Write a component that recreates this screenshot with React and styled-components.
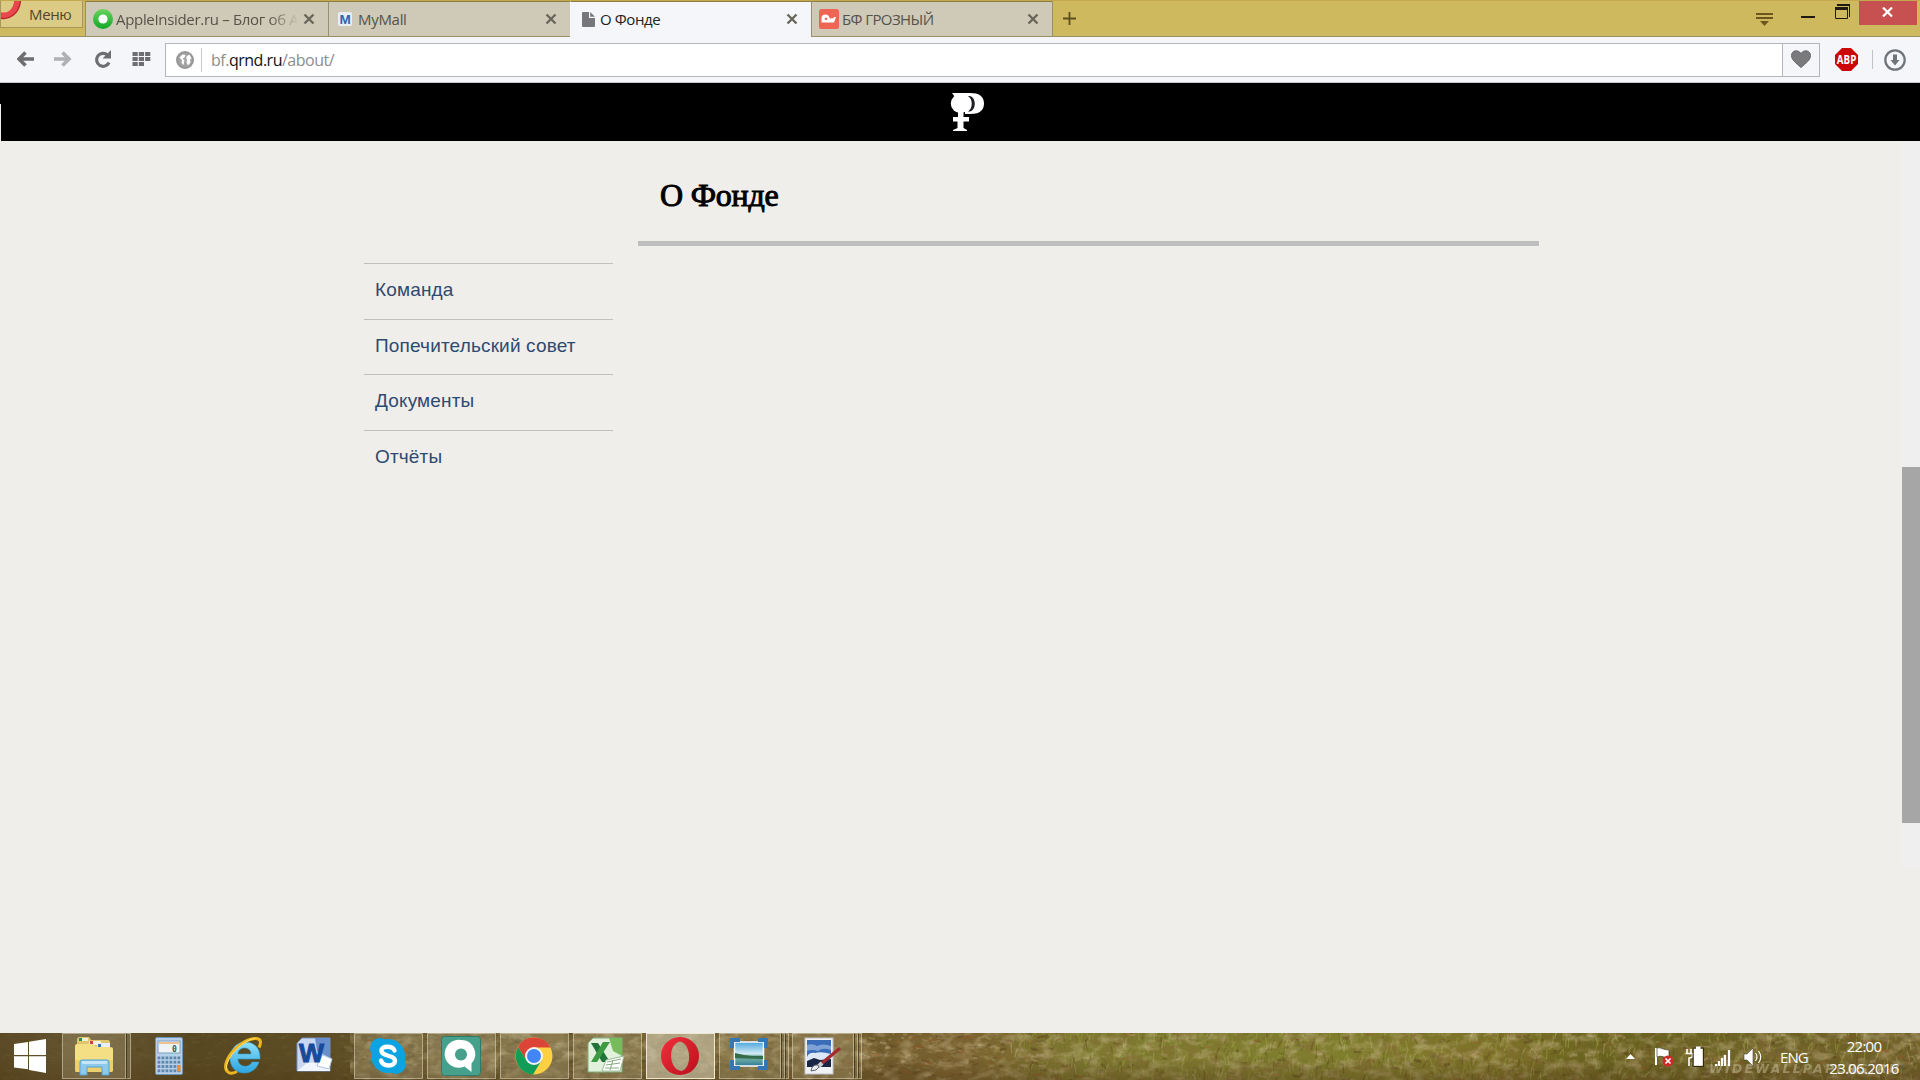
import React from "react";
import styled, { createGlobalStyle } from "styled-components";

const Global = createGlobalStyle`
  * { box-sizing: border-box; }
  html, body { margin: 0; padding: 0; overflow: hidden; }
  body { font-family: "Open Sans", "Noto Sans", sans-serif; background: #f0eeeb; }
  svg { display: block; flex: none; }
`;

const Screen = styled.div`
  width: 1920px;
  height: 1080px;
  display: flex;
  flex-direction: column;
  overflow: hidden;
`;

/* ---------- Browser chrome ---------- */
const TabBar = styled.div`
  height: 37px;
  flex: none;
  display: flex;
  align-items: flex-start;
  background: #cfb95f;
  border-top: 1px solid #c3a94b;
  border-bottom: 1px solid #97906b;
`;

const MenuButton = styled.div`
  width: 83px;
  height: 27px;
  display: flex;
  background: #dccb85;
  border: 1px solid #a8975a;
  border-top: 0;
  margin-right: 2px;
`;

const MenuLabel = styled.span`
  margin-left: 6px;
  font-size: 15px;
  line-height: 27px;
  letter-spacing: -0.35px;
  color: #4f482c;
`;

const Tab = styled.div`
  width: ${(p) => p.$w}px;
  height: ${(p) => (p.$active ? 36 : 35)}px;
  display: flex;
  align-items: center;
  padding-left: ${(p) => p.$pad}px;
  padding-right: 13px;
  padding-bottom: ${(p) => (p.$active ? 1 : 0)}px;
  background: ${(p) => (p.$active ? "#f4f6f9" : "#cfc9b7")};
  border-top: 1px solid #8b7f46;
  border-left: 1px solid ${(p) => (p.$active ? "#f4f6f9" : "#96906f")};
  margin-bottom: ${(p) => (p.$active ? -1 : 0)}px;
`;

const TabTitle = styled.span`
  flex: 1;
  min-width: 0;
  margin-left: ${(p) => p.$gap}px;
  margin-right: 6px;
  white-space: nowrap;
  font-size: 15px;
  line-height: 34px;
  letter-spacing: ${(p) => p.$ls || 0}px;
  color: ${(p) => (p.$active ? "#222" : "#55524a")};
  ${(p) => p.$fade && "mask-image: linear-gradient(90deg, #000 84%, transparent 101%);"}
`;

const NewTab = styled.div`
  width: 36px;
  height: 35px;
  display: flex;
  align-items: center;
  padding-left: 10px;
  border-left: 1px solid #96906f;
`;

const WindowControls = styled.div`
  margin-left: auto;
  display: flex;
  height: 35px;
  padding-right: 3px;
`;

const CloseWindow = styled.div`
  width: 58px;
  height: 24px;
  display: flex;
  align-items: center;
  justify-content: center;
  padding-right: 2px;
  padding-bottom: 2px;
  background: #c75050;
`;

const Toolbar = styled.div`
  height: 46px;
  flex: none;
  display: flex;
  align-items: center;
  background: #f4f6f9;
  border-bottom: 1px solid #c6c8ca;
`;

const NavButtons = styled.div`
  width: 165px;
  display: flex;
  align-items: center;
  padding-left: 17px;
`;

const AddressBar = styled.div`
  width: 1655px;
  height: 34px;
  display: flex;
  align-items: center;
  background: #fff;
  border: 1px solid #b2b6b8;
`;

const SiteInfo = styled.div`
  width: 36px;
  height: 24px;
  display: flex;
  align-items: center;
  padding-left: 10px;
  border-right: 1px solid #c8c8c8;
`;

const Url = styled.div`
  flex: 1;
  padding-left: 9px;
  font-size: 16px;
  line-height: 32px;
  letter-spacing: -0.49px;
  color: #8d8d8d;
  b { font-weight: 400; color: #111; }
`;

const HeartBox = styled.div`
  width: 37px;
  height: 32px;
  display: flex;
  align-items: center;
  justify-content: center;
  padding-bottom: 2px;
  background: #f4f6f9;
  border-left: 1px solid #b2b6b8;
`;

const Extensions = styled.div`
  flex: 1;
  display: flex;
  align-items: center;
  padding-left: 15px;
`;

const Divider = styled.i`
  width: 1px;
  height: 19px;
  margin: 0 11px 0 14px;
  background: #c0c4c8;
`;

/* ---------- Page ---------- */
const Viewport = styled.div`
  height: 950px;
  flex: none;
  display: flex;
  flex-direction: column;
  background: #f0eeeb;
`;

const SiteHeader = styled.header`
  height: 58px;
  flex: none;
  display: flex;
  background: #000;
`;

const EdgeSliver = styled.i`
  width: 1px;
  height: 37px;
  margin-top: 21px;
  margin-right: 949px;
  background: #f0eeeb;
`;

const LogoBox = styled.div`
  padding-top: 9px;
`;

const PageBody = styled.div`
  flex: 1;
  display: flex;
`;

const Sidebar = styled.nav`
  width: 249px;
  margin-left: 364px;
  padding-top: 122px;
`;

const SideLink = styled.a`
  display: block;
  height: ${(p) => p.$h}px;
  padding-left: 11px;
  border-top: 1px solid #bfbfbd;
  font-family: "Liberation Sans", Arial, sans-serif;
  font-size: 19px;
  line-height: 52px;
  letter-spacing: 0.16px;
  white-space: nowrap;
  color: #2f4a70;
`;

const Main = styled.main`
  width: 901px;
  margin-left: 25px;
`;

const Title = styled.h1`
  height: 105px;
  margin: 0;
  padding: 36px 0 0 22px;
  border-bottom: 5px solid #bebebf;
  font-family: "Liberation Serif", "Times New Roman", serif;
  font-size: 32px;
  font-weight: 400;
  line-height: 36px;
  letter-spacing: -0.2px;
  -webkit-text-stroke: 1px #000;
  color: #000;
`;

const ScrollTrack = styled.div`
  width: 18px;
  height: 726px;
  margin-left: auto;
  padding-top: 326px;
  background: #efefef;
`;

const ScrollThumb = styled.div`
  height: 356px;
  background: #a6a6a6;
`;

/* ---------- Taskbar ---------- */
const TaskbarRoot = styled.div`
  height: 47px;
  flex: none;
  display: grid;
  background: #6b5b2e;
  > * { grid-area: 1 / 1; }
`;

const TaskRow = styled.div`
  display: flex;
  align-items: stretch;
  z-index: 1;
  width: 1920px;
`;

const Task = styled.div`
  width: ${(p) => p.$w}px;
  height: 46px;
  margin-left: ${(p) => p.$ml || 0}px;
  padding-right: ${(p) => p.$nudge || 0}px;
  padding-bottom: ${(p) => p.$lift || 0}px;
  display: flex;
  align-items: center;
  justify-content: center;
  ${(p) =>
    p.$open &&
    `background: ${p.$active ? "rgba(215, 208, 182, 0.6)" : "rgba(225, 215, 180, 0.2)"};
     border: 1px solid rgba(240, 235, 215, ${p.$active ? 0.95 : 0.45});`}
`;

const StackEdge = styled.i`
  width: ${(p) => p.$w}px;
  height: 46px;
  background: rgba(225, 215, 180, 0.16);
  border: 1px solid rgba(240, 235, 215, 0.45);
  border-left: 1px solid rgba(40, 30, 10, 0.6);
`;

const Tray = styled.div`
  margin-left: auto;
  display: flex;
  align-items: center;
  width: 302px;
  color: #fff;
`;

const Lang = styled.span`
  width: 46px;
  margin-left: 12px;
  font-size: 15px;
  line-height: 20px;
  letter-spacing: -0.9px;
`;

const Clock = styled.div`
  width: 76px;
  flex: none;
  display: flex;
  flex-direction: column;
  align-items: center;
  font-size: 15px;
  line-height: 22px;
  letter-spacing: -0.7px;
  white-space: nowrap;
`;

const CloseX = ({ c = "#6a675d" }) => (
  <svg width="12" height="12" viewBox="0 0 12 12">
    <path d="M1.5 1.5l9 9M10.5 1.5l-9 9" stroke={c} strokeWidth="2.4" />
  </svg>
);

const rand = (seed) => {
  let s = seed;
  return () => {
    s = (s * 16807) % 2147483647;
    return s / 2147483647;
  };
};

function Meadow() {
  const r = rand(71);
  const blades = [];
  for (let i = 0; i < 2600; i++) {
    const x = r() * 1920;
    const y = r() * 52;
    const green = x > 1060 || (x > 1010 && r() > 0.4);
    const left = x < 840;
    const leaf = green && r() > (x > 1640 ? 0.55 : 0.82);
    const upright = green && !leaf;
    const h = upright ? 3 + r() * 9 : (r() - 0.5) * 4;
    const w = upright ? (r() - 0.4) * 8 : 2 + r() * 7;
    const set = upright
      ? ["#9ca044", "#656a1e", "#858b32", "#5d4b1c", "#aaa266", "#767329", "#8f9a35"]
      : left
      ? ["#8b7b4d", "#54431b", "#857548", "#4f3e18"]
      : ["#a08b5d", "#5c421e", "#8c5728", "#74643a", "#ad9b71", "#604b22"];
    blades.push(
      <path
        key={i}
        d={`M${x.toFixed(1)} ${y.toFixed(1)}q${(w / 3).toFixed(1)} ${(-h / 1.4).toFixed(1)} ${w.toFixed(1)} ${(-h).toFixed(1)}`}
        stroke={set[Math.floor(r() * set.length)]}
        strokeWidth={upright ? 1.3 : 1 + r() * 2}
        opacity={left ? (x < 340 ? 0.12 : 0.36) : 0.5}
        fill="none"
      />
    );
  }
  return (
    <svg width="1920" height="47" viewBox="0 0 1920 47">
      <defs>
        <linearGradient id="ground">
          <stop offset="0" stopColor="#5b4a25" />
          <stop offset="0.05" stopColor="#665632" />
          <stop offset="0.1" stopColor="#584822" />
          <stop offset="0.17" stopColor="#5d4d25" />
          <stop offset="0.23" stopColor="#6e5f36" />
          <stop offset="0.44" stopColor="#6d5a2b" />
          <stop offset="0.5" stopColor="#79602f" />
          <stop offset="0.56" stopColor="#7d7930" />
          <stop offset="0.7" stopColor="#7f7e2d" />
          <stop offset="0.78" stopColor="#7e7128" />
          <stop offset="0.83" stopColor="#69631f" />
          <stop offset="1" stopColor="#705f2a" />
        </linearGradient>
        <linearGradient id="dusk" x2="0" y2="1">
          <stop offset="0.5" stopColor="#4e3815" stopOpacity="0" />
          <stop offset="1" stopColor="#4e3815" stopOpacity="0.4" />
        </linearGradient>
        <filter id="mottle" x="0" y="0" width="1" height="1">
          <feTurbulence type="fractalNoise" baseFrequency="0.07 0.11" numOctaves="4" seed="5" />
          <feColorMatrix values="0 0 0 0 0.72  0 0 0 0 0.62  0 0 0 0 0.38  2.6 0 0 0 -1.15" />
        </filter>
        <filter id="shade" x="0" y="0" width="1" height="1">
          <feTurbulence type="fractalNoise" baseFrequency="0.04 0.07" numOctaves="4" seed="12" />
          <feColorMatrix values="0 0 0 0 0.24  0 0 0 0 0.15  0 0 0 0 0.04  0 2.8 0 0 -1.2" />
        </filter>
      </defs>
      <rect width="1920" height="47" fill="url(#ground)" />
      <rect x="350" width="1570" height="47" filter="url(#shade)" opacity="0.6" />
      {blades}
      <rect x="350" width="1570" height="47" filter="url(#mottle)" opacity="0.4" />
      <rect width="1920" height="47" fill="url(#dusk)" />
      <text x="1709" y="40" fontFamily="DejaVu Sans" fontStyle="italic" fontWeight="700" fontSize="12.5" textLength="190" fill="#c9c09a" opacity="0.5">
        WIDEWALLPAPERS.RU
      </text>
    </svg>
  );
}

const StartIcon = () => (
  <svg width="32" height="34" viewBox="0 0 32 34">
    <path d="M0 5l14-2v13H0zM15 2.8L32 0v16H15zM0 17.200h14v13L0 28.500zM15 17.200h17V34l-17-3z" fill="#fff" />
  </svg>
);

const ExplorerIcon = () => (
  <svg width="40" height="40" viewBox="0 0 40 40">
    <path d="M3 4q0-3 3-3h9l2 3h17q2 0 2 3v10H3z" fill="#dfc56a" />
    <path d="M5 2h9v3H5z" fill="#eef0dc" /><path d="M5 2h3v3H5z" fill="#2b8c4b" />
    <path d="M15 5h12v4H15z" fill="#f5efe0" /><path d="M16 5h3v3h-3z" fill="#c8453a" />
    <path d="M23 7h13v5H23z" fill="#e8eef5" /><path d="M24 8h3v3h-3z" fill="#3474b5" />
    <path d="M1 10q0-2 2-2h16l3 3h14q3 0 3 2v21q0 2-3 2H3q-2 0-2-2z" fill="#f5df85" />
    <path d="M1 24h38v10q0 2-3 2H3q-2 0-2-2z" fill="#ecd06d" />
    <path d="M6 26q0-2 2-2h25q2 0 2 2v13h-7v-8H13v8H6z" fill="#8cc9ea" stroke="#55a3d2" />
    <path d="M8 25h25v3H8z" fill="#c4e6f7" />
  </svg>
);

const CalcIcon = () => (
  <svg width="28" height="38" viewBox="0 0 28 38">
    <rect x="0.500" y="0.500" width="27" height="37" rx="1.500" fill="#b5d0e8" stroke="#6e93b8" />
    <rect x="3" y="4" width="22" height="12" fill="#eef3f5" stroke="#7c9fbd" />
    <path d="M4 6h20" stroke="#eeb06c" strokeWidth="1.500" />
    <text x="17" y="15" fontFamily="DejaVu Sans Mono" fontSize="8" fontWeight="700" fill="#34536f">0</text>
    {[0, 1, 2, 3].map((r) =>
      [0, 1, 2, 3, 4, 5].map((c) => (
        <rect key={`${r}-${c}`} x={2.5 + c * 4} y={19.5 + r * 4.3} width="2.800" height="2.800" fill="#5d87ad" />
      ))
    )}
    <rect x="22" y="28" width="3.500" height="6.500" fill="#f08c2a" />
  </svg>
);

const IeIcon = () => (
  <svg width="40" height="40" viewBox="0 0 40 40">
    <defs>
      <linearGradient id="ieb" x2="0" y2="1"><stop offset="0" stopColor="#8fe0fa" /><stop offset="1" stopColor="#2da5df" /></linearGradient>
    </defs>
    <path fillRule="evenodd" d="M22 6c9 0 15 6 15 15v2H15c0 9 12 9 14 3h7c-2 7-8 11-15 11C12 37 7 30 7 22S13 6 22 6zM15 18h13c0-8-13-8-13 0z" fill="url(#ieb)" stroke="#289bd4" strokeWidth="0.600" />
    <path d="M5 36C-4 29 14 4 32 2.500c7-.5 6 5 4 9M5 36c2 2 5 1.500 9-.5" fill="none" stroke="#edb51d" strokeWidth="3" />
    <path d="M4 34C0 26 18 4 32 2.500" fill="none" stroke="#ffe173" strokeWidth="1" />
  </svg>
);

const WordIcon = () => (
  <svg width="38" height="36" viewBox="0 0 38 36">
    <path d="M7 1h28v33H2V6z" fill="#c9d8f0" stroke="#7490c2" />
    <path d="M20 1h15v20L22 14z" fill="#6a8dcb" />
    <path d="M2 34l10-8 23-2v10z" fill="#f2f6fc" />
    <path d="M24 23l4-5 9 4-3 10-12-3z" fill="#fff" stroke="#aec2e0" />
    <text x="4" y="25" fontFamily="Liberation Sans" fontSize="26" fontWeight="700" textLength="25" lengthAdjust="spacingAndGlyphs" fill="#184a9c" stroke="#184a9c">W</text>
  </svg>
);

const SkypeIcon = () => (
  <svg width="38" height="38" viewBox="0 0 38 38">
    <circle cx="11" cy="11" r="10" fill="#0ba3e2" /><circle cx="27" cy="27" r="10" fill="#0ba3e2" /><circle cx="19" cy="19" r="17" fill="#0ba3e2" />
    <path d="M25.500 13.500c-2-5-13-5-13 0 0 6.500 13.500 4 13.500 10.500 0 6-12 6-14-.5" fill="none" stroke="#fff" strokeWidth="4.400" strokeLinecap="round" />
  </svg>
);

const QIcon = () => (
  <svg width="40" height="40" viewBox="0 0 40 40">
    <rect x="0.500" y="0.500" width="39" height="39" rx="3" fill="#47a08b" stroke="#2f7b69" />
    <path fillRule="evenodd" d="M20 4a14 14 0 0 1 10.500 23.500V36l-7-5.500A14 14 0 1 1 20 4zm0 8.500a6 6 0 1 0 .01 0z" fill="#fff" />
  </svg>
);

const ChromeIcon = () => (
  <svg width="38" height="38" viewBox="0 0 38 38">
    <circle cx="19" cy="19" r="18.500" fill="#ffd042" />
    <path d="M3 10A18.500 18.500 0 0 1 35.500 10.500H19L11 23z" fill="#db4437" />
    <path d="M3 10A18.500 18.500 0 0 0 18 37.500L26.500 23.500 11.500 23.500z" fill="#119d58" />
    <circle cx="19" cy="19" r="9" fill="#f4f4f4" /><circle cx="19" cy="19" r="7" fill="#4285f4" />
  </svg>
);

const ExcelIcon = () => (
  <svg width="38" height="36" viewBox="0 0 38 36">
    <path d="M6 1h29v34H1V6z" fill="#e2f1dc" stroke="#7cb078" />
    <path d="M22 1h13v18L26 14z" fill="#77bb5c" />
    <path d="M4 6h7l12 19h-8z" fill="#21733a" /><path d="M16 5h7L10 25H4z" fill="#3c9a43" />
    <path d="M19 23l18-4-4 15H15z" fill="#fff" stroke="#9dbb99" />
    <path d="M20 25l14-3M19 28l14-2M18 31h14M26 23l-3 10" stroke="#88ac82" />
  </svg>
);

const OperaIcon = () => (
  <svg width="40" height="40" viewBox="0 0 40 40">
    <defs>
      <linearGradient id="op" x2="1" y2="1"><stop offset="0" stopColor="#f3303c" /><stop offset="1" stopColor="#b80f1c" /></linearGradient>
    </defs>
    <path fillRule="evenodd" d="M20 1a19 19 0 1 1-.01 0zm0 4.500c-12 2-12 27 1 29.500 11-2 11-27-1-29.500z" fill="url(#op)" />
  </svg>
);

const PicturesIcon = () => (
  <svg width="38" height="34" viewBox="0 0 38 34">
    <defs>
      <linearGradient id="sea" x2="0" y2="1">
        <stop offset="0" stopColor="#4ba4dd" /><stop offset="0.500" stopColor="#d5edf4" /><stop offset="0.600" stopColor="#5d9b8c" /><stop offset="0.750" stopColor="#65a5a0" /><stop offset="1" stopColor="#2e799b" />
      </linearGradient>
    </defs>
    <rect x="4.500" y="4" width="29" height="24" fill="url(#sea)" stroke="#f3f6f8" strokeWidth="1.600" />
    <path d="M5 20V15l9 2 8 1 11 0v3z" fill="#356a4a" />
    <path d="M0 0h10v4H4v6H0zM28 0h10v10h-4V4h-6zM0 22h4v6h6v4H0zM34 22h4v10H28v-4h6z" fill="#3378b4" />
  </svg>
);

const PaintIcon = () => (
  <svg width="38" height="38" viewBox="0 0 38 38">
    <rect x="1" y="1" width="28" height="36" fill="#f0f1f4" stroke="#c0c3cb" />
    <rect x="3" y="3" width="24" height="27" fill="#3a6cba" />
    <path d="M3 8q6-2 10 1 6-3 14 0v4q-8-3-13 1-6-2-11 0z" fill="#9dbbe2" opacity="0.7" />
    <path d="M3 20q2-5 8-4 6-2 16 1v8H3z" fill="#dce8f5" />
    <path d="M3 24l7-3 6 2 11-1v8H3z" fill="#182544" />
    <path d="M35 12L17 27" stroke="#a52a2d" strokeWidth="3.400" strokeLinecap="round" />
    <path d="M18 26l-4 4" stroke="#c7cdd4" strokeWidth="4" /><path d="M14 28q-6-1-7 6 6 0 8-4z" fill="#e6e9ed" stroke="#59616a" />
  </svg>
);

const Favicons = {
  apple: (
    <svg width="20" height="20" viewBox="0 0 20 20">
      <defs><linearGradient id="ai" x2="0" y2="1"><stop offset="0" stopColor="#6ad45c" /><stop offset="1" stopColor="#12a728" /></linearGradient></defs>
      <circle cx="10" cy="10" r="10" fill="url(#ai)" /><circle cx="10" cy="10" r="4.600" fill="#fff" />
    </svg>
  ),
  mall: (
    <svg width="14" height="14" viewBox="0 0 14 14">
      <rect width="14" height="14" rx="2" fill="#e9eef5" />
      <text x="1.500" y="12" fontFamily="Liberation Sans" fontSize="13.500" fontWeight="700" fill="#2868ad">M</text>
    </svg>
  ),
  doc: (
    <svg width="13" height="15" viewBox="0 0 13 15">
      <path d="M1 0h6v6h6v8q0 1-1 1H1q-1 0-1-1V1q0-1 1-1z" fill="#77777b" /><path d="M8.200 0L13 4.800H8.200z" fill="#77777b" />
    </svg>
  ),
  bf: (
    <svg width="20" height="20" viewBox="0 0 20 20">
      <rect width="20" height="20" rx="2.500" fill="#ef6553" />
      <path fillRule="evenodd" d="M2.500 13.500V9q0-3.500 4-3.500 3.500 0 4 3.500l1.500 1 1-1.500 1 1.500 1-2h2l-2 5.500zm4.500-5a1.300 1.300 0 1 0 .01 0z" fill="#fff" />
    </svg>
  ),
};

const TABS = [
  { icon: "apple", title: "AppleInsider.ru – Блог об A", w: 243, pad: 7, gap: 3, ls: -0.32, fade: true },
  { icon: "mall", title: "MyMall", w: 242, pad: 9, gap: 6, ls: -0.3 },
  { icon: "doc", title: "О Фонде", w: 241, pad: 11, gap: 5, ls: -0.4, active: true },
  { icon: "bf", title: "БФ ГРОЗНЫЙ", w: 241, pad: 7, gap: 3, ls: -0.6 },
];

const LINKS = [
  { text: "Команда", h: 56 },
  { text: "Попечительский совет", h: 55 },
  { text: "Документы", h: 56 },
  { text: "Отчёты", h: 56 },
];

export default function App() {
  return (
    <Screen>
      <Global />
      <TabBar>
        <MenuButton>
          <svg width="22" height="20" viewBox="0 0 22 20">
            <path d="M-1 14.500c3 1 7 .5 10-2.500S14 5 14 0" fill="none" stroke="#ab2a30" strokeWidth="1.500" />
            <path d="M-1 14c8 2.500 16-3 17.300-14" fill="none" stroke="#e9474d" strokeWidth="6" />
            <path d="M-1 17c9 2.500 19-4 20.500-17" fill="none" stroke="#b8252f" strokeWidth="1.400" />
          </svg>
          <MenuLabel>Меню</MenuLabel>
        </MenuButton>
        {TABS.map((t) => (
          <Tab key={t.title} $w={t.w} $pad={t.pad} $active={t.active}>
            {Favicons[t.icon]}
            <TabTitle $gap={t.gap} $ls={t.ls} $fade={t.fade} $active={t.active}>{t.title}</TabTitle>
            <CloseX />
          </Tab>
        ))}
        <NewTab>
          <svg width="13" height="13" viewBox="0 0 13 13"><path d="M6.500 0v13M0 6.500h13" stroke="#5e501d" strokeWidth="1.800" /></svg>
        </NewTab>
        <WindowControls>
          <svg width="103" height="30" viewBox="0 0 103 30">
            <path d="M0 13h17M0 17h17" stroke="#6b5620" strokeWidth="1.800" /><path d="M4 20h9l-4.500 5z" fill="#6b5620" />
            <path d="M45 16h14" stroke="#1f1b10" strokeWidth="2" />
            <path d="M79.500 7.500h12v10h-12z" fill="none" stroke="#1f1b10" /><path d="M79 6h13v3H79zM81 3h13v13h-1V5H81z" fill="#1f1b10" />
          </svg>
          <CloseWindow>
            <svg width="11" height="10" viewBox="0 0 11 10"><path d="M1 .5l9 9M10 .5l-9 9" stroke="#fff" strokeWidth="2.200" /></svg>
          </CloseWindow>
        </WindowControls>
      </TabBar>

      <Toolbar>
        <NavButtons>
          <svg width="136" height="20" viewBox="0 0 136 20">
            <path d="M2 9h15M8.500 2.500L2 9l6.500 6.500" fill="none" stroke="#6e6e70" strokeWidth="3.600" />
            <path d="M37 9h15M45.500 2.500L52 9l-6.500 6.500" fill="none" stroke="#aeb0b2" strokeWidth="3.600" />
            <path d="M92 12.500a6.500 6.500 0 1 1-1.500-7.500" fill="none" stroke="#6e6e70" strokeWidth="3.200" /><path d="M94 0v8.500h-8.500z" fill="#6e6e70" />
            {[0, 1, 2].map((r) => [0, 1, 2].map((c) => r * 3 + c < 8 && <rect key={`${r}${c}`} x={115.500 + c * 6.300} y={2 + r * 5} width="5.200" height="4" fill="#6e6e70" />))}
          </svg>
        </NavButtons>
        <AddressBar>
          <SiteInfo>
            <svg width="18" height="18" viewBox="0 0 18 18">
              <circle cx="9" cy="9" r="8" fill="#a3a3a3" stroke="#979797" strokeWidth="2" />
              <path d="M3.500 6.500l3-3 3 .5-1 2.500-2 1 2 1.500-1 5-2-2 .5-2.500z" fill="#fff" />
              <path d="M11 5l2.500-1.500 2 4-1.500 1 .5 3-2.500 3-1.500-3 .5-3-1-1.500z" fill="#fff" />
            </svg>
          </SiteInfo>
          <Url>bf.<b>qrnd.ru</b>/about/</Url>
          <HeartBox>
            <svg width="20" height="18" viewBox="0 0 20 18"><path d="M10 17.500C5 13 .5 10 .5 5.500.5.500 7-1 10 3.500c3-4.500 9.500-3 9.500 2C19.500 10 15 13 10 17.500z" fill="#7a7a7c" stroke="#68686a" /></svg>
          </HeartBox>
        </AddressBar>
        <Extensions>
          <svg width="23" height="23" viewBox="0 0 23 23">
            <path d="M7 0h9l7 7v9l-7 7H7l-7-7V7z" fill="#cc0606" />
            <text x="1.800" y="15.500" fontFamily="Open Sans" fontWeight="700" fontSize="11.500" textLength="19.500" lengthAdjust="spacingAndGlyphs" fill="#fff">ABP</text>
          </svg>
          <Divider />
          <svg width="22" height="22" viewBox="0 0 22 22">
            <circle cx="11" cy="11" r="9.700" fill="none" stroke="#6f7478" strokeWidth="2.200" />
            <path d="M9 5.500h4V11h2.500L11 16.500 6.500 11H9z" fill="#6f7478" />
          </svg>
        </Extensions>
      </Toolbar>

      <Viewport>
        <SiteHeader>
          <EdgeSliver />
          <LogoBox>
            <svg width="36" height="40" viewBox="0 0 36 40">
              <path d="M2 1h18c9 0 14 3 14 10.500S29 22 20 22h-5v-3z" fill="#fff" />
              <path d="M18 4c2 0 3.500.3 4.500 1.500 3 3 3 9.500 0 12.500-1 1-2.500 1.500-4.500 1.500 5-3 5-12.500 0-15.500z" fill="#1d1d22" />
              <circle cx="10.500" cy="11.500" r="9.700" fill="#fff" />
              <path d="M8 20h5.500v5H19v4.500h-5.500V36l3.500 2v1H3v-1l4.500-2v-6.500H3V25h5z" fill="#fff" />
            </svg>
          </LogoBox>
        </SiteHeader>
        <PageBody>
          <Sidebar>
            {LINKS.map((l) => (
              <SideLink key={l.text} $h={l.h}>{l.text}</SideLink>
            ))}
          </Sidebar>
          <Main>
            <Title>О Фонде</Title>
          </Main>
          <ScrollTrack><ScrollThumb /></ScrollTrack>
        </PageBody>
      </Viewport>

      <TaskbarRoot>
        <Meadow />
        <TaskRow>
          <Task $w={60}><StartIcon /></Task>
          <Task $w={64} $ml={2} $open><ExplorerIcon /></Task>
          <StackEdge $w={5} />
          <Task $w={75}><CalcIcon /></Task>
          <Task $w={73}><IeIcon /></Task>
          <Task $w={70} $nudge={1} $lift={2}><WordIcon /></Task>
          <Task $w={69} $ml={5} $nudge={2} $open><SkypeIcon /></Task>
          <Task $w={69} $ml={4} $nudge={2} $open><QIcon /></Task>
          <Task $w={69} $ml={4} $nudge={2} $open><ChromeIcon /></Task>
          <Task $w={69} $ml={4} $nudge={3} $lift={2} $open><ExcelIcon /></Task>
          <Task $w={69} $ml={4} $nudge={2} $open $active><OperaIcon /></Task>
          <Task $w={62} $ml={4} $nudge={3} $lift={2} $open><PicturesIcon /></Task>
          <StackEdge $w={4} /><StackEdge $w={4} />
          <Task $w={62} $ml={3} $open><PaintIcon /></Task>
          <StackEdge $w={4} /><StackEdge $w={4} />
          <Tray>
            <svg width="150" height="24" viewBox="0 0 150 24">
              <path d="M8 14h9l-4.500-5z" fill="#fff" />
              <path d="M38 3v17" stroke="#fff" strokeWidth="2" /><path d="M39 3c4-1 6 2 12 2v8c-5 0-7-3-12-1z" fill="#fff" stroke="#302a15" strokeWidth="0.600" />
              <circle cx="50" cy="16" r="5.500" fill="#cf2a28" /><path d="M47.500 13.500l5 5M52.500 13.500l-5 5" stroke="#fff" strokeWidth="1.600" />
              <path d="M69 4v4M73 4v4M67.500 8.500h7V11q0 2-3.500 2v8" fill="none" stroke="#fff" strokeWidth="1.600" />
              <rect x="76.500" y="4.500" width="7.500" height="15.500" fill="#fff" stroke="#fff" strokeWidth="1.500" /><rect x="75" y="3" width="10.500" height="18.500" fill="none" stroke="#302a15" /><rect x="78" y="1.500" width="4.500" height="2.500" fill="#fff" />
              <path d="M98 21v-2M101 21v-5M104 21v-8M107 21V10M111 21V5" stroke="#fff" strokeWidth="2.200" />
              <path d="M126 9h3l6-6v18l-6-6h-3z" fill="#fff" stroke="#302a15" strokeWidth="0.500" />
              <path d="M137.500 8q3 4 0 8M140.500 6q4.500 6 0 12" fill="none" stroke="#fff" strokeWidth="1.200" />
            </svg>
            <Lang>ENG</Lang>
            <Clock><span>22:00</span><span>23.06.2016</span></Clock>
          </Tray>
        </TaskRow>
      </TaskbarRoot>
    </Screen>
  );
}
